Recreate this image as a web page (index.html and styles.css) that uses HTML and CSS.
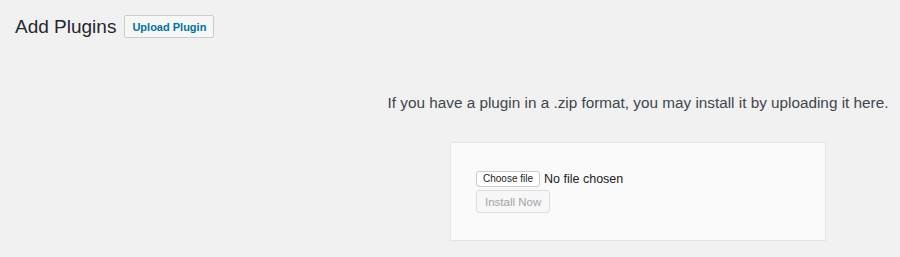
FILE: index.html
```html
<!DOCTYPE html>
<html lang="en">
<head>
    <meta charset="UTF-8">
    <title>Add Plugins</title>
    <link rel="stylesheet" href="styles.css">
</head>
<body>
    <div class="wrap">
        <div class="page-head">
            <h1>Add Plugins</h1>
            <button class="upload-toggle">Upload Plugin</button>
        </div>

        <div class="upload-plugin">
            <p class="install-help">If you have a plugin in a .zip format, you may install it by uploading it here.</p>
            <form class="upload-form">
                <div class="file-row">
                    <span class="choose-btn">Choose file</span>
                    <span class="file-name">No file chosen</span>
                </div>
                <button type="submit" class="install-btn" disabled>Install Now</button>
            </form>
        </div>
    </div>
</body>
</html>
```

FILE: styles.css
```css
* {
    margin: 0;
    padding: 0;
    box-sizing: border-box;
}

body {
    font-family: 'Liberation Sans', Arial, sans-serif;
    background: #f1f1f1;
    color: #23282d;
    width: 900px;
    height: 257px;
    overflow: hidden;
}

.wrap {
    padding: 15px 0 0 15px;
}

.page-head {
    display: flex;
    align-items: center;
    gap: 8px;
}

h1 {
    font-size: 19px;
    font-weight: 400;
    color: #23282d;
    line-height: 22px;
}

.upload-toggle {
    font-family: inherit;
    font-size: 11px;
    font-weight: 700;
    color: #0071a1;
    background: #f7f7f7;
    border: 1px solid #ccc;
    border-radius: 2px;
    height: 23px;
    padding: 0 7px;
}

.upload-plugin {
    margin-left: 368px;
    width: 510px;
    display: flex;
    flex-direction: column;
    align-items: center;
}

.install-help {
    font-size: 15.3px;
    color: #40464d;
    margin: 56px 0 30px;
    white-space: nowrap;
}

.upload-form {
    width: 376px;
    height: 99px;
    background: #fafafa;
    border: 1px solid #e5e5e5;
    padding: 28px 25px;
}

.file-row {
    display: flex;
    align-items: center;
    gap: 4px;
}

.choose-btn {
    font-size: 10px;
    color: #222;
    background: #fff;
    border: 1px solid #ccc;
    border-radius: 3px;
    height: 16px;
    line-height: 14px;
    padding: 0 6px;
}

.file-name {
    font-size: 12.5px;
    color: #222;
}

.install-btn {
    font-family: inherit;
    font-size: 11.5px;
    color: #a0a5aa;
    background: #f7f7f7;
    border: 1px solid #ddd;
    border-radius: 3px;
    height: 23px;
    padding: 0 8px;
    margin-top: 3px;
}
```
